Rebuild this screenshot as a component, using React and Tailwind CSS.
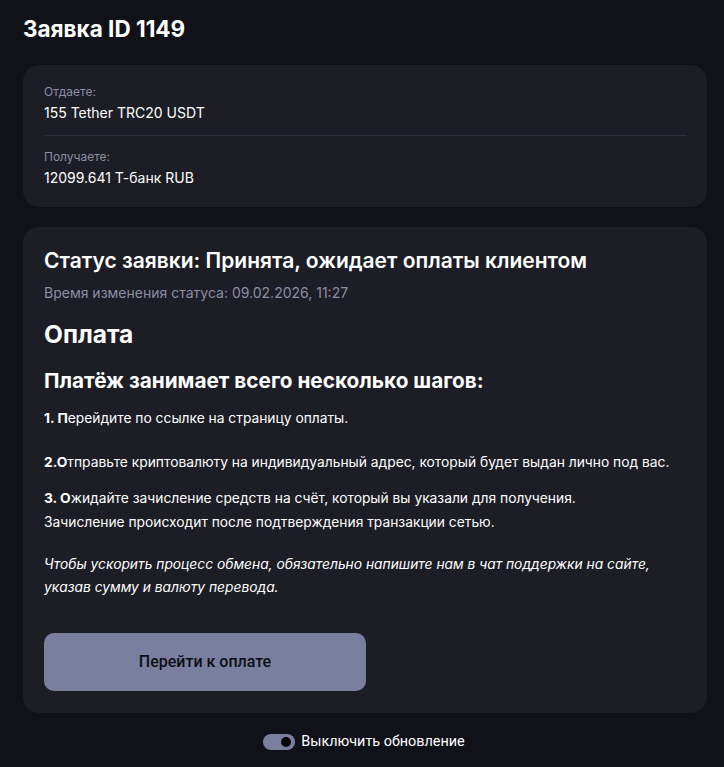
import React from "react";

export default function App() {
  return (
    <div className="min-h-[767px] w-full bg-[#111219] px-[23px] pt-[15px] pb-[20px] text-white" style={{ fontFamily: "Inter, 'Noto Sans', sans-serif" }}>
      <h1 className="text-[22.5px] font-bold leading-[28px]">Заявка ID 1149</h1>

      <div className="mt-[22px] w-[684px] rounded-[16px] bg-[#1c1d25] px-[21px] pt-[18px] pb-[19px]">
        <div className="text-[12px] leading-[18px] text-[#8c8fa3]">Отдаете:</div>
        <div className="mt-[2px] text-[14px] leading-[20px]">155 Tether TRC20 USDT</div>
        <div className="mt-[12px] h-px bg-[#2c2e38]" />
        <div className="pt-[12px] text-[12px] leading-[18px] text-[#8c8fa3]">Получаете:</div>
        <div className="mt-[2px] text-[14px] leading-[20px]">12099.641 Т-банк RUB</div>
      </div>

      <div className="mt-[20px] w-[684px] rounded-[16px] bg-[#1c1d25] px-[21px] pt-[20px] pb-[22px]">
        <h2 className="text-[21px] font-semibold leading-[28px]">Статус заявки: Принята, ожидает оплаты клиентом</h2>
        <div className="mt-[8px] text-[14px] leading-[20px] text-[#8c8fa3]">Время изменения статуса: 09.02.2026, 11:27</div>
        <h3 className="mt-[15px] text-[24.5px] font-bold leading-[32px]">Оплата</h3>
        <h4 className="mt-[17px] text-[20.75px] font-bold leading-[28px]">Платёж занимает всего несколько шагов:</h4>
        <div className="mt-[11px] text-[13.8px] leading-[24px]">
          <p><b>1. П</b>ерейдите по ссылке на страницу оплаты.</p>
          <p className="mt-[20px]"><b>2.О</b>тправьте криптовалюту на индивидуальный адрес, который будет выдан лично под вас.</p>
          <p className="mt-[12px]"><b>3. О</b>жидайте зачисление средств на счёт, который вы указали для получения.<br />Зачисление происходит после подтверждения транзакции сетью.</p>
          <p className="mt-[19px] italic leading-[23px]">Чтобы ускорить процесс обмена, обязательно напишите нам в чат поддержки на сайте, указав сумму и валюту перевода.</p>
        </div>
        <button className="mt-[34px] flex h-[58px] w-[322px] items-center justify-center rounded-[10px] bg-[#7a7fa0] text-[16px] font-medium text-[#0d0e13]" style={{ fontFamily: "Roboto, 'Liberation Sans', sans-serif" }}>
          Перейти к оплате
        </button>
      </div>

      <div className="mt-[19px] flex items-center justify-center gap-[6px] pl-[4px]" style={{ fontFamily: "Roboto, 'Liberation Sans', sans-serif" }}>
        <div className="relative h-[16px] w-[32px] rounded-full bg-[#7a7fa0]">
          <div className="absolute right-[4px] top-[3px] h-[10px] w-[10px] rounded-full bg-black" />
        </div>
        <span className="text-[14.4px] leading-[20px] text-white">Выключить обновление</span>
      </div>
    </div>
  );
}
